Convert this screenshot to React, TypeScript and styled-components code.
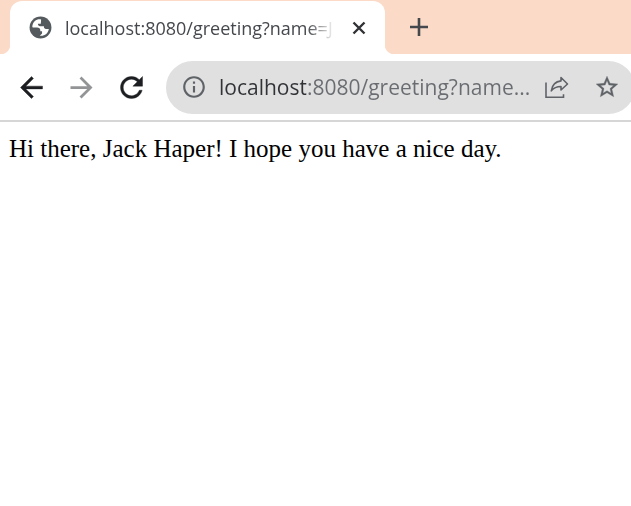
import React from "react";
import styled, { createGlobalStyle } from "styled-components";

const GlobalStyle = createGlobalStyle`
  *, *::before, *::after { box-sizing: border-box; }
  body { margin: 0; background: #fff; }
`;

const uiFont = `"Open Sans", "Noto Sans", sans-serif`;

const Browser = styled.div`
  display: flex;
  flex-direction: column;
  min-height: 100vh;
  overflow-x: hidden;
  font-family: ${uiFont};
`;

const TabStrip = styled.header`
  display: flex;
  align-items: flex-end;
  height: 54px;
  padding-left: 10px;
  background: #fcdac8;
`;

const Tab = styled.div`
  position: relative;
  display: flex;
  align-items: center;
  flex: 0 1 375px;
  min-width: 0;
  height: 53px;
  padding: 0 14px 0 18px;
  border-radius: 12px 12px 0 0;
  background: #fff;

  &::before,
  &::after {
    content: "";
    position: absolute;
    bottom: 0;
    width: 10px;
    height: 10px;
  }
  &::before {
    right: 100%;
    background: radial-gradient(circle at 0 0, transparent 10px, #fff 11px);
  }
  &::after {
    left: 100%;
    background: radial-gradient(circle at 100% 0, transparent 10px, #fff 11px);
  }
`;

const TabTitle = styled.span`
  flex: 1;
  min-width: 0;
  margin: 0 12px;
  overflow: hidden;
  white-space: nowrap;
  font-size: 18px;
  line-height: 28px;
  color: #45484c;
  mask-image: linear-gradient(to left, transparent 0, #000 28px);
`;

const IconButton = styled.button<{ $size: number; $tone?: string }>`
  display: flex;
  flex: none;
  align-items: center;
  justify-content: center;
  width: ${(p) => p.$size}px;
  height: ${(p) => p.$size}px;
  padding: 0;
  border: 0;
  border-radius: 50%;
  background: transparent;
  color: ${(p) => p.$tone ?? "#5f6368"};
`;

const NewTab = styled(IconButton)`
  align-self: center;
  margin-left: 16px;
`;

const Toolbar = styled.nav`
  display: flex;
  align-items: center;
  height: 68px;
  padding-left: 6px;
  border-bottom: 2px solid #d6d6d6;
  background: #fff;
`;

const AddressBar = styled.form`
  display: flex;
  align-items: center;
  flex: 1;
  min-width: 0;
  height: 53px;
  margin: 0 -4px 0 10px;
  padding: 0 3px 0 10px;
  border-radius: 27px;
  background: #e0e0e0;
`;

const AddressInput = styled.input`
  flex: 1;
  min-width: 0;
  margin: 0 2px 0 7px;
  padding: 0;
  border: 0;
  outline: 0;
  background: linear-gradient(to right, #303236 87px, #696c70 87px);
  background-clip: text;
  color: transparent;
  font-family: ${uiFont};
  font-size: 21px;
  line-height: 32px;
`;

const Page = styled.main`
  flex: 1;
  padding: 12px 9px;
  background: #fff;
  color: #000;
  font-family: "Liberation Serif", serif;
  font-size: 25px;
  line-height: 30px;
`;

const Greeting = styled.p`
  margin: 0;
`;

const Globe = () => (
  <svg width="25" height="25" viewBox="0 0 24 24" aria-hidden="true">
    <circle cx="12" cy="12" r="10.5" fill="#555a5f" />
    <path
      fill="#fff"
      d="M12.600 4.200C8.500 3.300 5 6 4.200 10.300c-.2 1 .1 1.700.8 1.700h3.800c1.800 0 3 1.100 3 2.600v.9h1.700v2.300l-2.200 2.100c4.500.6 8-2.300 8.700-6.500h-2.700c-1.300 0-2-.7-2-1.800v-.9h-3.700c-1.300 0-2.100-.8-2.100-2V8.300h2.800z"
    />
  </svg>
);

const Back = () => (
  <svg width="33" height="33" viewBox="0 0 24 24" fill="currentColor" stroke="currentColor" strokeWidth="0.3" aria-hidden="true">
    <path d="M20 11H7.830l5.590-5.590L12 4l-8 8 8 8 1.410-1.410L7.830 13H20z" />
  </svg>
);

const Forward = () => (
  <svg width="33" height="33" viewBox="0 0 24 24" fill="currentColor" aria-hidden="true">
    <path d="M12 4l-1.410 1.410L16.170 11H4v2h12.170l-5.580 5.590L12 20l8-8z" />
  </svg>
);

const Reload = () => (
  <svg width="33" height="33" viewBox="0 0 24 24" fill="currentColor" stroke="currentColor" strokeWidth="0.3" aria-hidden="true">
    <path d="M17.650 6.350C16.200 4.900 14.210 4 12 4c-4.420 0-7.990 3.580-7.990 8s3.570 8 7.990 8c3.730 0 6.840-2.550 7.730-6h-2.080c-.82 2.330-3.040 4-5.650 4-3.310 0-6-2.690-6-6s2.690-6 6-6c1.660 0 3.140.69 4.220 1.780L13 11h7V4z" />
  </svg>
);

const Info = () => (
  <svg width="26" height="26" viewBox="0 0 24 24" fill="currentColor" aria-hidden="true">
    <path d="M11 7h2v2h-2zm0 4h2v6h-2zm1-9C6.480 2 2 6.480 2 12s4.480 10 10 10 10-4.480 10-10S17.520 2 12 2zm0 18c-4.410 0-8-3.590-8-8s3.590-8 8-8 8 3.590 8 8-3.590 8-8 8z" />
  </svg>
);

const Share = () => (
  <svg width="26" height="26" viewBox="0 0 26 26" fill="none" stroke="currentColor" strokeWidth="1.6" aria-hidden="true">
    <path d="M2 8.500v14.700h17.500v-3" />
    <path strokeLinejoin="round" d="M17 3.500l6.500 6.500-6.500 6v-3.500c-4.500 0-7.300 1.200-9.700 4.300.8-5.600 3.900-9.200 9.700-9.900z" />
  </svg>
);

const Star = () => (
  <svg width="26" height="26" viewBox="0 0 24 24" fill="currentColor" stroke="currentColor" strokeWidth="0.3" aria-hidden="true">
    <path d="M22 9.240l-7.190-.62L12 2 9.190 8.630 2 9.240l5.460 4.730L5.820 21 12 17.270 18.180 21l-1.630-7.030zM12 15.400l-3.760 2.270 1-4.280-3.320-2.880 4.380-.38L12 6.100l1.710 4.040 4.380.38-3.320 2.880 1 4.280z" />
  </svg>
);

const Close = () => (
  <svg width="14" height="14" viewBox="0 0 14 14" stroke="currentColor" strokeWidth="2.400" aria-hidden="true">
    <path d="M1.500 1.500l11 11M12.500 1.500l-11 11" />
  </svg>
);

const Plus = () => (
  <svg width="20" height="20" viewBox="0 0 20 20" stroke="currentColor" strokeWidth="2.600" aria-hidden="true">
    <path d="M10 1v18M1 10h18" />
  </svg>
);

export default function App() {
  return (
    <Browser>
      <GlobalStyle />
      <TabStrip>
        <Tab>
          <Globe />
          <TabTitle>localhost:8080/greeting?name=J</TabTitle>
          <IconButton type="button" $size={24} $tone="#303236" aria-label="Close tab">
            <Close />
          </IconButton>
        </Tab>
        <NewTab type="button" $size={36} $tone="#45484c" aria-label="New tab">
          <Plus />
        </NewTab>
      </TabStrip>
      <Toolbar>
        <IconButton type="button" $size={50} $tone="#1c1e21" aria-label="Back">
          <Back />
        </IconButton>
        <IconButton type="button" $size={50} $tone="#929496" aria-label="Forward">
          <Forward />
        </IconButton>
        <IconButton type="button" $size={50} $tone="#1c1e21" aria-label="Reload">
          <Reload />
        </IconButton>
        <AddressBar onSubmit={(e) => e.preventDefault()}>
          <IconButton type="button" $size={36} aria-label="Site information">
            <Info />
          </IconButton>
          <AddressInput aria-label="Address" defaultValue="localhost:8080/greeting?name..." />
          <IconButton type="button" $size={50} aria-label="Share">
            <Share />
          </IconButton>
          <IconButton type="button" $size={50} aria-label="Bookmark">
            <Star />
          </IconButton>
        </AddressBar>
      </Toolbar>
      <Page>
        <Greeting>Hi there, Jack Haper! I hope you have a nice day.</Greeting>
      </Page>
    </Browser>
  );
}
